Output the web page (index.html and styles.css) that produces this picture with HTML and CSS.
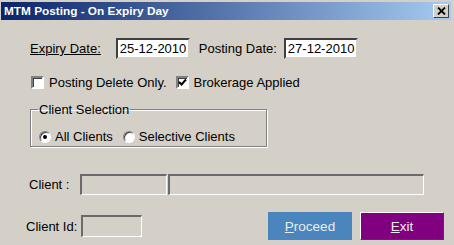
FILE: index.html
```html
<!DOCTYPE html>
<html lang="en">

<head>
  <meta charset="UTF-8">
  <title>MTM Posting - On Expiry Day</title>
  <link rel="stylesheet" href="styles.css">
</head>

<body>
  <div class="window">
    <div class="title-bar">
      <div class="title-text">MTM Posting - On Expiry Day</div>
      <div class="close-btn">
        <svg width="9" height="8" viewBox="0 0 9 8"><path d="M1 0.5 L8 7.5 M8 0.5 L1 7.5" stroke="#000" stroke-width="1.8" /></svg>
      </div>
    </div>

    <div class="content">
      <div class="row dates-row">
        <span class="label expiry-label">Expiry Date:</span>
        <div class="date-box">25-12-2010</div>
        <span class="label posting-label">Posting Date:</span>
        <div class="date-box">27-12-2010</div>
      </div>

      <div class="row checks-row">
        <span class="check"></span>
        <span class="check-label">Posting Delete Only.</span>
        <span class="check checked">
          <svg width="9" height="9" viewBox="0 0 9 9"><path d="M1 4 L3.5 6.5 L8 1.5" fill="none" stroke="#000" stroke-width="2" /></svg>
        </span>
        <span class="check-label">Brokerage Applied</span>
      </div>

      <fieldset class="group">
        <legend>Client Selection</legend>
        <div class="radio-row">
          <span class="radio selected"><span class="dot"></span></span>
          <span class="radio-label">All Clients</span>
          <span class="radio"></span>
          <span class="radio-label">Selective Clients</span>
        </div>
      </fieldset>

      <div class="row client-row">
        <span class="label client-label">Client :</span>
        <div class="flat-box code-box"></div>
        <div class="flat-box name-box"></div>
      </div>

      <div class="row bottom-row">
        <span class="label client-id-label">Client Id:</span>
        <div class="flat-box id-box"></div>
        <div class="buttons">
          <div class="btn proceed-btn"><u>P</u>roceed</div>
          <div class="btn exit-btn"><u>E</u>xit</div>
        </div>
      </div>
    </div>
  </div>
</body>

</html>
```

FILE: styles.css
```css
* {
  margin: 0;
  padding: 0;
  box-sizing: border-box;
}

body {
  font-family: 'Liberation Sans', Arial, sans-serif;
  font-size: 13px;
  color: #000;
  background: #d4d0c8;
}

.window {
  width: 454px;
  height: 245px;
  background: #d4d0c8;
  padding: 2px 3px 0 1px;
  overflow: hidden;
}

.title-bar {
  height: 18px;
  display: flex;
  align-items: center;
  justify-content: space-between;
  background: linear-gradient(to right, #0a246a, #a6caf0);
  padding: 0 2px 0 3px;
}

.title-text {
  color: #fff;
  font-weight: 700;
  font-size: 11.8px;
}

.close-btn {
  width: 16px;
  height: 14px;
  background: #d4d0c8;
  border: 1px solid;
  border-color: #fff #404040 #404040 #fff;
  display: flex;
  align-items: center;
  justify-content: center;
}

.content {
  padding-left: 29px;
}

.row {
  display: flex;
  align-items: center;
  white-space: nowrap;
}

.dates-row {
  margin-top: 18px;
  height: 21px;
}

.expiry-label {
  text-decoration: underline;
  margin-right: 15px;
}

.posting-label {
  margin: 0 7px 0 9px;
}

.date-box {
  width: 74px;
  height: 21px;
  background: #fff;
  border: 2px solid;
  border-color: #404040 #d4d0c8 #d4d0c8 #404040;
  padding-left: 2px;
  line-height: 17px;
  font-size: 13px;
  white-space: nowrap;
}

.checks-row {
  margin-top: 15px;
  height: 16px;
}

.check {
  width: 13px;
  height: 13px;
  background: #fff;
  border: 2px solid;
  border-color: #808080 #fff #fff #808080;
  box-shadow: inset 1px 1px 0 #404040;
  display: flex;
  align-items: center;
  justify-content: center;
  margin: 0 1px 0 1px;
}

.check-label {
  margin: 0 8px 0 4px;
}

.group {
  margin-top: 12px;
  width: 237px;
  height: 45px;
  border: 1px solid #808080;
  box-shadow: 1px 1px 0 #fff, inset 1px 1px 0 #fff;
  padding: 0 8px;
}

.group legend {
  padding: 0 1px;
  margin-left: -1px;
  line-height: 15px;
}

.radio-row {
  display: flex;
  align-items: center;
  margin-top: 12px;
  white-space: nowrap;
}

.radio {
  width: 12px;
  height: 12px;
  border-radius: 50%;
  background: #fff;
  border: 1px solid;
  border-color: #808080 #fff #fff #808080;
  box-shadow: inset 1px 1px 0 #404040;
  display: flex;
  align-items: center;
  justify-content: center;
}

.dot {
  width: 4px;
  height: 4px;
  border-radius: 50%;
  background: #000;
}

.radio-label {
  margin: 0 10px 0 4px;
}

.client-row {
  margin-top: 27px;
  height: 21px;
}

.client-label {
  width: 51px;
  margin-left: -1px;
}

.flat-box {
  height: 21px;
  border: 2px solid;
  border-color: #6a6a6a #fff #fff #6a6a6a;
  border-width: 2px 1px 1px 2px;
}

.code-box {
  width: 87px;
  margin-right: 1px;
}

.name-box {
  width: 256px;
}

.bottom-row {
  margin-top: 17px;
  margin-left: -4px;
  height: 28px;
}

.client-id-label {
  width: 55px;
}

.id-box {
  width: 61px;
  height: 22px;
}

.buttons {
  display: flex;
  gap: 8px;
  margin-left: 126px;
}

.btn {
  width: 84px;
  height: 28px;
  display: flex;
  align-items: center;
  justify-content: center;
  color: #ececec;
  font-size: 13.5px;
}

.proceed-btn {
  background: #4a86bd;
}

.exit-btn {
  background: #800080;
  border: 1px solid;
  border-color: #fff #404040 #404040 #fff;
}
```
